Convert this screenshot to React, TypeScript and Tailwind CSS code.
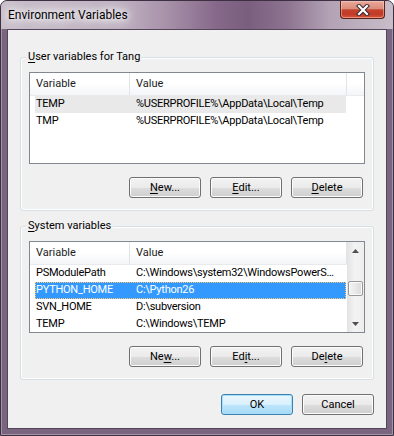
import React from "react";

type EnvVar = { name: string; value: string };

const userVars: EnvVar[] = [
  { name: "TEMP", value: "%USERPROFILE%\\AppData\\Local\\Temp" },
  { name: "TMP", value: "%USERPROFILE%\\AppData\\Local\\Temp" },
];

const systemVars: EnvVar[] = [
  { name: "PSModulePath", value: "C:\\Windows\\system32\\WindowsPowerShell\\v1.0\\Modules\\" },
  { name: "PYTHON_HOME", value: "C:\\Python26" },
  { name: "SVN_HOME", value: "D:\\subversion" },
  { name: "TEMP", value: "C:\\Windows\\TEMP" },
];

function Mnemonic({ text, at }: { text: string; at: number }) {
  return (
    <>
      {text.slice(0, at)}
      <span className="underline underline-offset-[2px]">{text[at]}</span>
      {text.slice(at + 1)}
    </>
  );
}

function WinButton({ text, at, primary }: { text: string; at?: number; primary?: boolean }) {
  return (
    <button
      className={
        primary
          ? "h-[21px] w-[72px] rounded-[3px] border border-[#3c7fb1] bg-[linear-gradient(to_bottom,#eaf6fd_0%,#d9f0fc_50%,#bee6fd_50%,#a7d9f5_100%)] shadow-[inset_0_0_0_1px_#a6e1fb] text-[11px] leading-none text-black"
          : "h-[21px] w-[72px] rounded-[3px] border border-[#707070] bg-[linear-gradient(to_bottom,#f2f2f2_0%,#ebebeb_50%,#dddddd_50%,#cfcfcf_100%)] shadow-[inset_0_0_0_1px_#fcfcfc] text-[11px] leading-none text-black"
      }
    >
      {at === undefined ? text : <Mnemonic text={text} at={at} />}
    </button>
  );
}

function Arrow({ down }: { down?: boolean }) {
  return (
    <div className="h-[17px] flex items-center justify-center">
      <svg width="7" height="4" viewBox="0 0 7 4">
        <path d={down ? "M0 0 L7 0 L3.5 4 Z" : "M3.5 0 L7 4 L0 4 Z"} fill="#505050" />
      </svg>
    </div>
  );
}

function ScrollBar() {
  return (
    <div className="w-[17px] flex flex-col bg-[linear-gradient(to_right,#e3e3e3,#f3f3f3_45%,#eeeeee)]">
      <Arrow />
      <div className="flex-1 flex flex-col">
        <div className="h-[22px]" />
        <div className="h-[15px] mx-[1px] rounded-[2px] border border-[#979797] bg-[linear-gradient(to_right,#f4f4f4,#e8e8e8_50%,#d9d9d9)] shadow-[inset_0_0_0_1px_#fafafa]" />
      </div>
      <Arrow down />
    </div>
  );
}

function ListView({
  rows,
  selected,
  hot,
  scroll,
}: {
  rows: EnvVar[];
  selected?: number;
  hot?: number;
  scroll?: boolean;
}) {
  return (
    <div className="h-[92px] w-full flex border border-[#828790] bg-white overflow-hidden">
      <div className="flex-1 min-w-0 flex flex-col">
        <div className="h-[23px] shrink-0 flex bg-[linear-gradient(to_bottom,#ffffff_0%,#ffffff_45%,#f4f5f7_100%)] border-b border-[#e8eaed] text-[#1c1c1c]">
          <div className="w-[100px] pl-[6px] flex items-center border-r border-[#e1e4e8]">Variable</div>
          <div className="w-[217px] pl-[6px] flex items-center border-r border-[#e1e4e8]">Value</div>
          <div className="flex-1" />
        </div>
        <div className="ml-[5px] w-[311px] flex flex-col tracking-[-0.25px]">
          {rows.map((r, i) => (
            <div
              key={r.name + i}
              className={
                i === selected
                  ? "h-[17px] shrink-0 flex items-center bg-[#3399ff] text-white outline-1 outline-dotted outline-[#f7c97a] -outline-offset-1"
                  : i === hot
                    ? "h-[17px] shrink-0 flex items-center bg-[#e9e9e9] text-black"
                    : "h-[17px] shrink-0 flex items-center text-black"
              }
            >
              <div className="w-[95px] pl-[1px] whitespace-nowrap">{r.name}</div>
              <div className="flex-1 min-w-0 pl-[6px] pr-[8px] truncate">{r.value}</div>
            </div>
          ))}
        </div>
      </div>
      {scroll && <ScrollBar />}
    </div>
  );
}

function GroupBox({ label, at, children }: { label: string; at: number; children: React.ReactNode }) {
  return (
    <div className="relative h-[154px] rounded-[3px] border border-[#d5dfe5] shadow-[inset_0_0_0_1px_#ffffff] px-[8px] pt-[14px] pb-[12px] flex flex-col">
      <span className="absolute -top-[9px] left-[5px] px-[2px] leading-[16px] bg-[#f0f0f0] text-black">
        <Mnemonic text={label} at={at} />
      </span>
      {children}
    </div>
  );
}

export default function App() {
  return (
    <div className="w-[394px] h-[436px] font-['Roboto','Liberation_Sans',sans-serif] text-[11px] select-none">
      <div className="w-full h-full flex flex-col rounded-t-[7px] border border-[#3d3042] bg-[#7a6580] shadow-[inset_0_0_0_1px_rgba(255,255,255,0.3)] overflow-hidden">
        {/* title bar */}
        <div className="h-[28px] shrink-0 flex items-start bg-[linear-gradient(90deg,#c9bfcb_0%,#c0b2c2_30%,#a892aa_42%,#86698a_55%,#7a5e7e_63%,#8d7490_73%,#b3a3b5_84%,#c8bdc9_100%)]">
          <span className="mt-[6px] ml-[7px] leading-[16px] text-[12px] text-black [text-shadow:0_0_6px_#fff,0_0_10px_#fff,0_0_14px_#fff,0_0_18px_#fff]">
            Environment Variables
          </span>
          <div className="ml-auto mr-[8px] h-[18px] w-[45px] flex items-center justify-center rounded-b-[4px] border border-t-0 border-[#5c2117] bg-[linear-gradient(to_bottom,#eaa898_0%,#d98d7c_45%,#c4432d_52%,#c13a26_78%,#d8583d_100%)] shadow-[inset_0_0_0_1px_rgba(255,220,210,0.45)]">
            <svg width="14" height="12" viewBox="0 0 14 12">
              <path d="M3 2 L11 10 M11 2 L3 10" stroke="#3a2a30" strokeWidth="4.2" strokeLinecap="square" />
              <path d="M3 2 L11 10 M11 2 L3 10" stroke="#ffffff" strokeWidth="2.2" strokeLinecap="square" />
            </svg>
          </div>
        </div>

        {/* frame + client */}
        <div className="flex-1 flex px-[6px] pb-[6px]">
          <div className="flex-1 flex flex-col border border-[#55455a] bg-[#f0f0f0] px-[12px] pt-[27px]">
            <GroupBox label="User variables for Tang" at={0}>
              <ListView rows={userVars} hot={0} />
              <div className="mt-[13px] flex justify-end gap-[9px] pr-[2px]">
                <WinButton text="New..." at={0} />
                <WinButton text="Edit..." at={0} />
                <WinButton text="Delete" at={0} />
              </div>
            </GroupBox>

            <div className="mt-[15px]">
              <GroupBox label="System variables" at={0}>
                <ListView rows={systemVars} selected={1} scroll />
                <div className="mt-[13px] flex justify-end gap-[9px] pr-[2px]">
                  <WinButton text="New..." at={2} />
                  <WinButton text="Edit..." at={2} />
                  <WinButton text="Delete" at={2} />
                </div>
              </GroupBox>
            </div>

            <div className="mt-[14px] flex justify-end gap-[9px]">
              <WinButton text="OK" primary />
              <WinButton text="Cancel" />
            </div>
          </div>
        </div>
      </div>
    </div>
  );
}
